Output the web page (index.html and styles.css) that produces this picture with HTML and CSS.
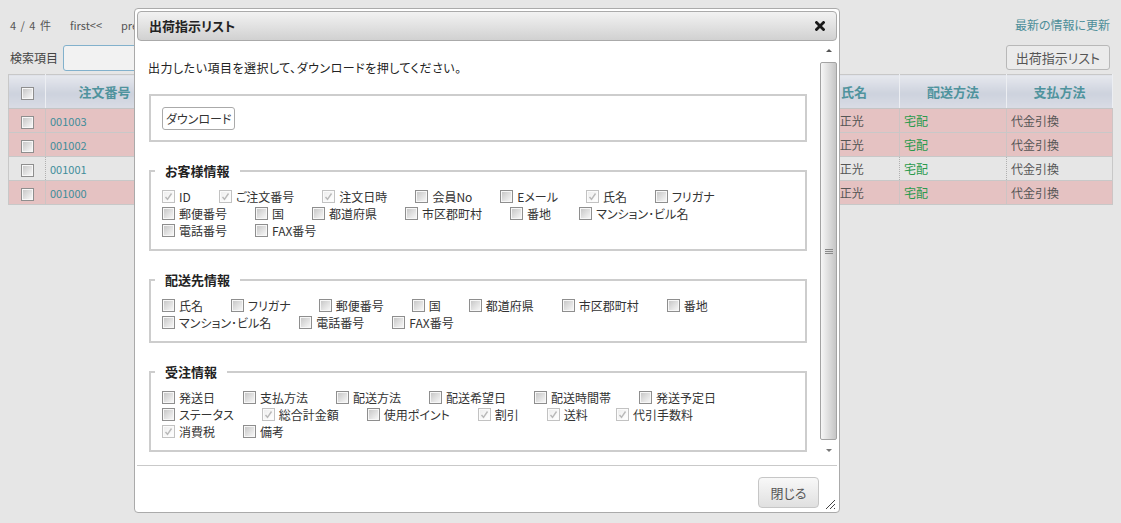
FILE: index.html
```html
<!DOCTYPE html>
<html lang="ja">
<head>
<meta charset="utf-8">
<title>出荷指示リスト</title>
<link rel="stylesheet" href="styles.css">
</head>
<body>
<div class="page">
  <div class="topbar">
    <div class="pager"><span class="count">4 / 4 件</span><span>first&lt;&lt;</span><span>pre</span></div>
    <a class="refresh" href="#">最新の情報に更新</a>
  </div>
  <div class="searchbar">
    <span class="search-label">検索項目</span>
    <input class="search-input" type="text">
    <button class="list-btn">出荷指示リスト</button>
  </div>
  <table class="orders">
    <colgroup>
      <col class="c-chk"><col class="c-no"><col class="c-mid"><col class="c-name"><col class="c-ship"><col class="c-pay">
    </colgroup>
    <thead>
      <tr><th><span class="cb"></span></th><th>注文番号</th><th></th><th>氏名</th><th>配送方法</th><th>支払方法</th></tr>
    </thead>
    <tbody>
      <tr class="pink"><td class="ctr"><span class="cb"></span></td><td class="no">001003</td><td></td><td>佐藤 正光</td><td class="ship">宅配</td><td>代金引換</td></tr>
      <tr class="pink"><td class="ctr"><span class="cb"></span></td><td class="no">001002</td><td></td><td>佐藤 正光</td><td class="ship">宅配</td><td>代金引換</td></tr>
      <tr class="grey"><td class="ctr"><span class="cb"></span></td><td class="no">001001</td><td></td><td>佐藤 正光</td><td class="ship">宅配</td><td>代金引換</td></tr>
      <tr class="pink"><td class="ctr"><span class="cb"></span></td><td class="no">001000</td><td></td><td>佐藤 正光</td><td class="ship">宅配</td><td>代金引換</td></tr>
    </tbody>
  </table>
</div>

<div class="dialog">
  <div class="titlebar">
    <span class="title">出荷指示リスト</span>
    <svg class="close" width="10" height="10" viewBox="0 0 10 10"><path d="M1.5 1.5 L8.5 8.5 M8.5 1.5 L1.5 8.5" stroke="#1a1a1a" stroke-width="2.8" stroke-linecap="square"/></svg>
  </div>
  <div class="body">
    <div class="main">
      <p class="intro">出力したい項目を選択して、ダウンロードを押してください。</p>
      <fieldset class="fs fs-dl">
        <button class="dl-btn">ダウンロード</button>
      </fieldset>
      <fieldset class="fs">
        <legend>お客様情報</legend>
        <div class="row">
          <label class="opt"><span class="cb on"><svg width="9" height="9" viewBox="0 0 9 9"><path d="M1.5 5 L3.5 7.3 L7.5 1.5" fill="none" stroke="#b9b9b9" stroke-width="1.4"/></svg></span>ID</label>
          <label class="opt"><span class="cb on"><svg width="9" height="9" viewBox="0 0 9 9"><path d="M1.5 5 L3.5 7.3 L7.5 1.5" fill="none" stroke="#b9b9b9" stroke-width="1.4"/></svg></span>ご注文番号</label>
          <label class="opt"><span class="cb on"><svg width="9" height="9" viewBox="0 0 9 9"><path d="M1.5 5 L3.5 7.3 L7.5 1.5" fill="none" stroke="#b9b9b9" stroke-width="1.4"/></svg></span>注文日時</label>
          <label class="opt"><span class="cb"></span>会員No</label>
          <label class="opt"><span class="cb"></span>Eメール</label>
          <label class="opt"><span class="cb on"><svg width="9" height="9" viewBox="0 0 9 9"><path d="M1.5 5 L3.5 7.3 L7.5 1.5" fill="none" stroke="#b9b9b9" stroke-width="1.4"/></svg></span>氏名</label>
          <label class="opt"><span class="cb"></span>フリガナ</label>
        </div>
        <div class="row">
          <label class="opt"><span class="cb"></span>郵便番号</label>
          <label class="opt"><span class="cb"></span>国</label>
          <label class="opt"><span class="cb"></span>都道府県</label>
          <label class="opt"><span class="cb"></span>市区郡町村</label>
          <label class="opt"><span class="cb"></span>番地</label>
          <label class="opt"><span class="cb"></span>マンション･ビル名</label>
        </div>
        <div class="row">
          <label class="opt"><span class="cb"></span>電話番号</label>
          <label class="opt"><span class="cb"></span>FAX番号</label>
        </div>
      </fieldset>
      <fieldset class="fs">
        <legend>配送先情報</legend>
        <div class="row">
          <label class="opt"><span class="cb"></span>氏名</label>
          <label class="opt"><span class="cb"></span>フリガナ</label>
          <label class="opt"><span class="cb"></span>郵便番号</label>
          <label class="opt"><span class="cb"></span>国</label>
          <label class="opt"><span class="cb"></span>都道府県</label>
          <label class="opt"><span class="cb"></span>市区郡町村</label>
          <label class="opt"><span class="cb"></span>番地</label>
        </div>
        <div class="row">
          <label class="opt"><span class="cb"></span>マンション･ビル名</label>
          <label class="opt"><span class="cb"></span>電話番号</label>
          <label class="opt"><span class="cb"></span>FAX番号</label>
        </div>
      </fieldset>
      <fieldset class="fs">
        <legend>受注情報</legend>
        <div class="row">
          <label class="opt"><span class="cb"></span>発送日</label>
          <label class="opt"><span class="cb"></span>支払方法</label>
          <label class="opt"><span class="cb"></span>配送方法</label>
          <label class="opt"><span class="cb"></span>配送希望日</label>
          <label class="opt"><span class="cb"></span>配送時間帯</label>
          <label class="opt"><span class="cb"></span>発送予定日</label>
        </div>
        <div class="row">
          <label class="opt"><span class="cb"></span>ステータス</label>
          <label class="opt"><span class="cb on"><svg width="9" height="9" viewBox="0 0 9 9"><path d="M1.5 5 L3.5 7.3 L7.5 1.5" fill="none" stroke="#b9b9b9" stroke-width="1.4"/></svg></span>総合計金額</label>
          <label class="opt"><span class="cb"></span>使用ポイント</label>
          <label class="opt"><span class="cb on"><svg width="9" height="9" viewBox="0 0 9 9"><path d="M1.5 5 L3.5 7.3 L7.5 1.5" fill="none" stroke="#b9b9b9" stroke-width="1.4"/></svg></span>割引</label>
          <label class="opt"><span class="cb on"><svg width="9" height="9" viewBox="0 0 9 9"><path d="M1.5 5 L3.5 7.3 L7.5 1.5" fill="none" stroke="#b9b9b9" stroke-width="1.4"/></svg></span>送料</label>
          <label class="opt"><span class="cb on"><svg width="9" height="9" viewBox="0 0 9 9"><path d="M1.5 5 L3.5 7.3 L7.5 1.5" fill="none" stroke="#b9b9b9" stroke-width="1.4"/></svg></span>代引手数料</label>
        </div>
        <div class="row">
          <label class="opt"><span class="cb on"><svg width="9" height="9" viewBox="0 0 9 9"><path d="M1.5 5 L3.5 7.3 L7.5 1.5" fill="none" stroke="#b9b9b9" stroke-width="1.4"/></svg></span>消費税</label>
          <label class="opt"><span class="cb"></span>備考</label>
        </div>
      </fieldset>
    </div>
    <div class="scrollbar">
      <div class="sb-btn"><span class="tri-up"></span></div>
      <div class="sb-thumb"><span class="grip"></span></div>
      <div class="sb-btn"><span class="tri-down"></span></div>
    </div>
  </div>
  <div class="pane">
    <button class="close-btn">閉じる</button>
  </div>
  <svg class="resize" width="12" height="12" viewBox="0 0 12 12"><path d="M11 2 L2 11 M11 6 L6 11 M11 10 L10 11" stroke="#444" stroke-width="1"/></svg>
</div>
</body>
</html>
```

FILE: styles.css
```css
* { box-sizing: border-box; }
html, body { margin: 0; padding: 0; }
body {
  width: 1121px;
  height: 523px;
  overflow: hidden;
  position: relative;
  background: #e6e6e6;
  font-family: "Noto Sans CJK JP", "Noto Sans", sans-serif;
  font-size: 12px;
  color: #333;
  font-feature-settings: "palt";
}

/* background page */
.page { padding: 0 8px; }
.topbar {
  display: flex;
  align-items: center;
  justify-content: space-between;
  height: 34px;
  padding: 16px 3px 0 2px;
  line-height: 18px;
}
.pager { display: flex; gap: 19px; font-size: 11px; color: #555; }
.pager .count { word-spacing: 2px; }
.refresh { color: #4d8e99; text-decoration: none; font-size: 12px; }
.searchbar {
  display: flex;
  align-items: flex-start;
  margin-top: 11px;
  height: 26px;
  padding: 0 3px 0 2px;
}
.search-label { color: #444; margin-right: 5px; line-height: 26px; }
.search-input {
  width: 200px;
  height: 26px;
  border: 1px solid #82b1cc;
  border-radius: 3px;
  background: #f2f2f2;
}
.list-btn {
  margin-left: auto;
  height: 25px;
  padding: 0 9px;
  border: 1px solid #b8b8b8;
  border-radius: 3px;
  background: #ebebeb;
  color: #555;
  font: inherit;
  font-size: 13px;
}

.orders {
  margin-top: 3px;
  width: 1105px;
  table-layout: fixed;
  border-collapse: collapse;
  border: 1px solid #c8c8c8;
}
.c-chk { width: 37px; }
.c-no { width: 118px; }
.c-mid { width: 645px; }
.c-name { width: 91px; }
.c-ship { width: 107px; }
.c-pay { width: 106px; }
.orders th {
  height: 34px;
  padding: 0;
  background: linear-gradient(#e6e8ee, #cdd2dd 55%, #d9dce5);
  color: #4f939d;
  font-size: 13px;
  font-weight: bold;
  border-right: 1px solid #eceef2;
  border-bottom: 1px solid #c4c4c4;
  text-align: center;
}
.orders td {
  height: 24px;
  padding: 0 4px;
  border-bottom: 1px solid #c8c8c8;
  border-right: 1px solid #cdc4c4;
  font-size: 12px;
  color: #555;
  white-space: nowrap;
  overflow: hidden;
}
.orders tr.pink td { background: #e5c2c2; }
.orders tr.grey td { background: #e6e6e6; border-right: 1px dotted #b0b0b0; }
.orders td.ctr { text-align: center; padding: 0; }
.orders td.no { color: #3f8d9a; font-size: 11px; }
.orders td.ship { color: #2a9a4c; }
.orders th .cb, .orders td .cb { vertical-align: middle; margin: 0; }

/* checkboxes */
.cb {
  display: inline-block;
  flex: none;
  width: 13px;
  height: 13px;
  margin-right: 4px;
  border: 1px solid #8e8e8e;
  padding: 1px;
  background: linear-gradient(135deg, #c8c8c8, #f6f6f6) content-box, #f7f7f7;
}
.cb.on {
  border-color: #c2c2c2;
  padding: 1px;
  background: linear-gradient(135deg, #eeeeee, #ffffff) content-box, #fbfbfb;
}
.cb.on svg { display: block; width: 9px; height: 9px; }

/* dialog */
.dialog {
  position: absolute;
  left: 134px;
  top: 8px;
  width: 706px;
  height: 505px;
  border: 1px solid #aaa;
  border-radius: 4px;
  background: #fff;
  padding: 2px;
  display: flex;
  flex-direction: column;
}
.titlebar {
  flex: none;
  height: 30px;
  display: flex;
  align-items: center;
  justify-content: space-between;
  padding: 0 11px 0 11px;
  border: 1px solid #aaa;
  border-radius: 4px;
  background: linear-gradient(#f2f2f2, #d1d1d1);
}
.title { font-size: 13px; font-weight: bold; color: #222; line-height: 18px; }
.close { display: block; }

.body { flex: 1; display: flex; min-height: 0; }
.main {
  flex: 1;
  overflow: hidden;
  padding: 18px 12px 0 11px;
}
.intro { margin: 0; line-height: 17px; color: #222; letter-spacing: 0.5px; }
.fs {
  margin: 0 1px 20px;
  border: 2px solid #cdcdcd;
  padding: 8px 10px 10px 11px;
  min-width: 0;
}
.fs-dl { margin-top: 18px; padding: 11px 10px 10px 11px; }
.fs legend {
  margin-left: -7px;
  padding: 0 10px;
  font-size: 13px;
  font-weight: bold;
  line-height: 18px;
  color: #222;
}
.dl-btn {
  display: block;
  height: 23px;
  padding: 0 3px;
  border: 1px solid #aaa;
  border-radius: 3px;
  background: #fff;
  color: #333;
  font: inherit;
  font-size: 12px;
}
.row { display: flex; height: 17px; line-height: 17px; }
.opt {
  display: flex;
  align-items: center;
  margin-right: 28px;
  white-space: nowrap;
  color: #333;
}

/* fake scrollbar */
.scrollbar {
  flex: none;
  width: 17px;
  display: flex;
  flex-direction: column;
  padding-bottom: 6px;
}
.sb-btn {
  flex: none;
  height: 18px;
  display: flex;
  align-items: center;
  justify-content: center;
}
.tri-up {
  width: 0; height: 0;
  border-left: 3px solid transparent;
  border-right: 3px solid transparent;
  border-bottom: 3px solid #555;
}
.tri-down {
  width: 0; height: 0;
  border-left: 3px solid transparent;
  border-right: 3px solid transparent;
  border-top: 3px solid #777;
}
.sb-thumb {
  flex: 1;
  margin: 3px 0 1px;
  border: 1px solid #a3a3a3;
  border-radius: 2px;
  background: linear-gradient(to right, #f7f7f7, #dedede 50%, #c5c5c5);
  display: flex;
  align-items: center;
  justify-content: center;
}
.grip {
  width: 8px;
  height: 5px;
  background: repeating-linear-gradient(#8a8a8a 0 1px, transparent 1px 2px);
}

.pane {
  flex: none;
  height: 45px;
  border-top: 1px solid #c9c9c9;
  display: flex;
  justify-content: flex-end;
  padding: 11px 18px 0 0;
}
.close-btn {
  width: 61px;
  height: 31px;
  border: 1px solid #c6c6c6;
  border-radius: 4px;
  background: linear-gradient(#f8f8f8, #e0e0e0);
  color: #555;
  font: inherit;
  font-size: 13px;
}
.resize { position: absolute; right: 3px; bottom: 2px; }
```
